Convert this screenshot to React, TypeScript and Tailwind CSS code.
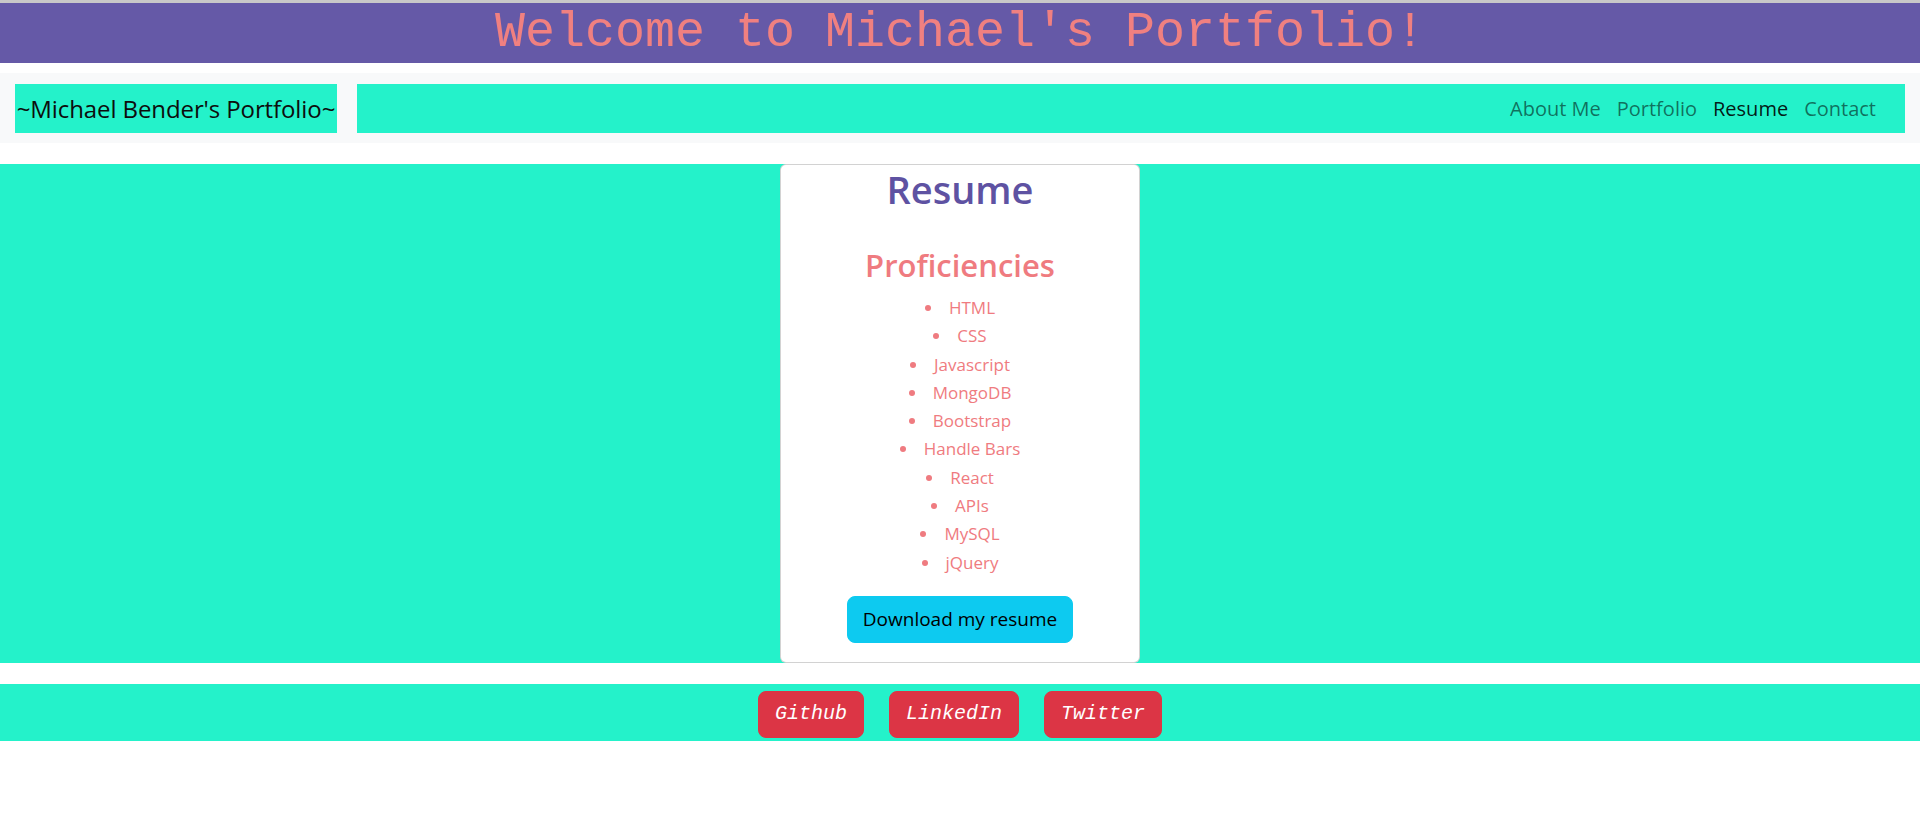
import React from "react";

const skills = [
  "HTML",
  "CSS",
  "Javascript",
  "MongoDB",
  "Bootstrap",
  "Handle Bars",
  "React",
  "APIs",
  "MySQL",
  "jQuery",
];

export default function App() {
  return (
    <div className="min-h-[821px] bg-white font-['Open_Sans','Noto_Sans',sans-serif]">
      <header className="border-t-[3px] border-[#c8c8c8] bg-[#6559a7]">
        <h1 className="h-[60px] text-center font-['Courier_New','Liberation_Mono',monospace] text-[50px] leading-[60px] text-[#f08080]">
          Welcome to Michael's Portfolio!
        </h1>
      </header>

      <nav className="mt-[10px] flex h-[70px] items-start gap-[20px] bg-[#f8f9fa] px-[15px] pt-[11px]">
        <div className="flex h-[49px] w-[322px] items-center justify-center whitespace-nowrap bg-[#24f2ca] text-[24px] tracking-[-0.1px] text-[#0d0d0d]">
          <span>~Michael Bender's Portfolio~</span>
        </div>
        <div className="flex h-[49px] flex-1 items-center justify-end bg-[#24f2ca] pr-[21px] text-[20px]">
          <a className="px-[8px] text-black/55">About Me</a>
          <a className="px-[8px] text-black/55">Portfolio</a>
          <a className="px-[8px] text-black/90">Resume</a>
          <a className="px-[8px] text-black/55">Contact</a>
        </div>
      </nav>

      <main className="mt-[21px] flex justify-center bg-[#24f2ca]">
        <div className="w-[360px] rounded-[6px] border border-black/[0.175] bg-white text-center">
          <h2 className="mb-[33px] text-[38px] font-semibold leading-[48px] text-[#5e52a2]">
            Resume
          </h2>
          <h3 className="mb-[10px] text-[31px] font-semibold leading-[38px] text-[#ef7b80]">
            Proficiencies
          </h3>
          <ul className="mb-[19px] list-inside list-disc text-[17px] leading-[28.3px] text-[#ef7b80]">
            {skills.map((s) => (
              <li key={s}>{s}</li>
            ))}
          </ul>
          <button className="mb-[19px] h-[47px] rounded-[8px] border border-[#0dcaf0] bg-[#0dcaf0] px-[15px] text-[19px] leading-[30px] text-black">
            Download my resume
          </button>
        </div>
      </main>

      <footer className="mt-[21px] flex h-[57px] items-start justify-center gap-[25px] bg-[#24f2ca] pt-[7px]">
        {["Github", "LinkedIn", "Twitter"].map((t) => (
          <button
            key={t}
            className="h-[47px] rounded-[8px] border border-[#dc3545] bg-[#dc3545] px-[16px] font-['Courier_New','Liberation_Mono',monospace] text-[20px] italic leading-[30px] text-white"
          >
            {t}
          </button>
        ))}
      </footer>
    </div>
  );
}
